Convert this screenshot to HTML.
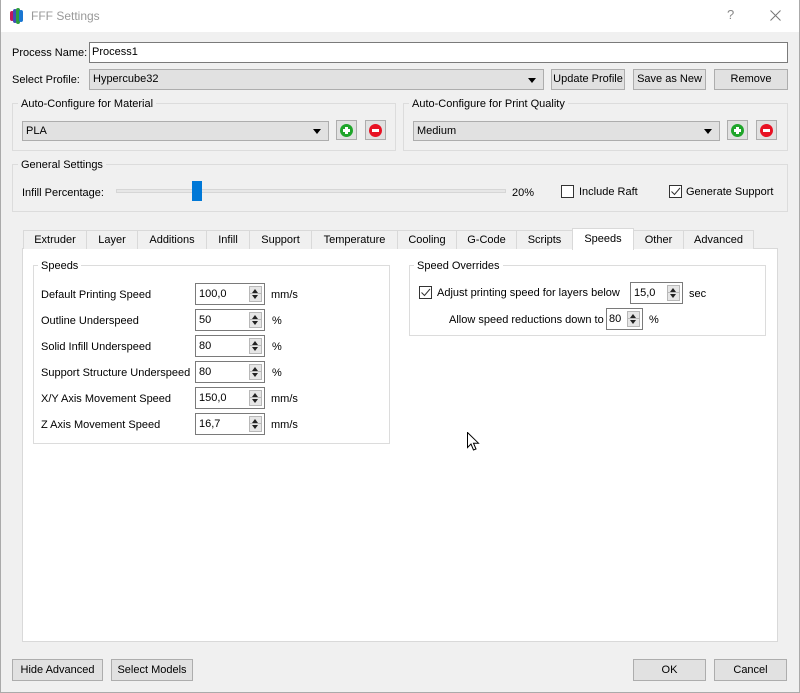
<!DOCTYPE html>
<html><head><meta charset="utf-8"><style>
*{box-sizing:border-box}
body{margin:0;width:800px;height:693px;overflow:hidden;background:#f0f0f0;font-family:"Liberation Sans",Arial,sans-serif;font-size:11px;color:#000;position:relative}
.a{position:absolute}
.t{position:absolute;white-space:nowrap;line-height:14px}
.btn{position:absolute;background:#e1e1e1;border:1px solid #adadad;text-align:center;white-space:nowrap}
.combo{position:absolute;background:#e1e1e1;border:1px solid #adadad;padding-left:3px;white-space:nowrap}
.combo:after{content:"";position:absolute;right:7px;top:50%;margin-top:-2px;border-left:4px solid transparent;border-right:4px solid transparent;border-top:5px solid #000}
.grp{position:absolute;border:1px solid #dcdcdc}
.gl{position:absolute;background:#f0f0f0;padding:0 3px;white-space:nowrap;line-height:14px}
.ib{position:absolute;width:21px;height:20px;background:#e1e1e1;border:1px solid #adadad}
.ib i{position:absolute;left:3px;top:3px;width:13px;height:13px;border-radius:50%}
.ib i:before,.ib i:after{content:"";position:absolute;background:#fff}
.ib i:before{left:3px;top:5px;width:7px;height:3px}
.g i:after{left:5px;top:3px;width:3px;height:7px}
.g i{background:#1fa52a}.r i{background:#e81123}
.spin{position:absolute;height:22px;background:#fff;border:1px solid #7a7a7a;padding-left:3px;line-height:20px}
.spin b{position:absolute;right:2px;top:2px;width:13px;height:16px;background:#e6e6e6;border:1px solid #b8b8b8}
.spin b:before{content:"";position:absolute;left:2px;top:2px;border-left:3px solid transparent;border-right:3px solid transparent;border-bottom:4px solid #222}
.spin b:after{content:"";position:absolute;left:2px;top:8px;border-left:3px solid transparent;border-right:3px solid transparent;border-top:4px solid #222}
.spin b i{position:absolute;left:0;right:0;top:6px;height:1px;background:#b8b8b8}
.cb{position:absolute;width:13px;height:13px;border:1px solid #333;background:#fff}
.tab{position:absolute;top:230px;height:19px;border:1px solid #d9d9d9;border-bottom:none;background:#f0f0f0;text-align:center;line-height:18px;white-space:nowrap}
</style></head><body>
<div class="a" style="left:0;top:0;width:800px;height:32px;background:#fff"></div>
<div class="a" style="left:0;top:0;width:1px;height:693px;background:#aaa"></div>
<div class="a" style="right:0;top:0;width:1px;height:693px;background:#aaa"></div>
<div class="a" style="left:0;bottom:0;width:800px;height:1px;background:#aaa"></div>
<svg class="a" style="left:9px;top:8px" width="16" height="16"><rect x="1" y="3" width="4" height="10" rx="2" fill="#c2185b"/><rect x="4" y="1" width="4" height="14" rx="2" fill="#3f51b5"/><rect x="7" y="0" width="4" height="16" rx="2" fill="#2e9e3e"/><rect x="10" y="2" width="4" height="12" rx="2" fill="#1976d2"/></svg>
<div class="t" style="left:31px;top:9px;font-size:12px;color:#999">FFF Settings</div>
<div class="t" style="left:727px;top:8px;font-size:13px;color:#888">?</div>
<svg class="a" style="left:770px;top:10px" width="11" height="11"><path d="M0.5 0.5L10.5 10.5M10.5 0.5L0.5 10.5" stroke="#777" stroke-width="1"/></svg>

<div class="t" style="left:12px;top:46px">Process Name:</div>
<div class="a" style="left:89px;top:42px;width:699px;height:21px;background:#fff;border:1px solid #7a7a7a;padding:2px 2px;line-height:14px">Process1</div>
<div class="t" style="left:12px;top:73px">Select Profile:</div>
<div class="combo" style="left:89px;top:69px;width:455px;height:21px;line-height:19px">Hypercube32</div>
<div class="btn" style="left:551px;top:69px;width:74px;height:21px;line-height:19px">Update Profile</div>
<div class="btn" style="left:633px;top:69px;width:73px;height:21px;line-height:19px">Save as New</div>
<div class="btn" style="left:714px;top:69px;width:74px;height:21px;line-height:19px">Remove</div>

<div class="grp" style="left:12px;top:103px;width:384px;height:48px"></div>
<div class="gl" style="left:18px;top:97px">Auto-Configure for Material</div>
<div class="combo" style="left:22px;top:121px;width:307px;height:20px;line-height:18px">PLA</div>
<div class="ib g" style="left:336px;top:120px"><i></i></div>
<div class="ib r" style="left:365px;top:120px"><i></i></div>

<div class="grp" style="left:403px;top:103px;width:385px;height:48px"></div>
<div class="gl" style="left:409px;top:97px">Auto-Configure for Print Quality</div>
<div class="combo" style="left:413px;top:121px;width:307px;height:20px;line-height:18px">Medium</div>
<div class="ib g" style="left:727px;top:120px"><i></i></div>
<div class="ib r" style="left:756px;top:120px"><i></i></div>

<div class="grp" style="left:12px;top:164px;width:776px;height:48px"></div>
<div class="gl" style="left:18px;top:158px">General Settings</div>
<div class="t" style="left:22px;top:186px">Infill Percentage:</div>
<div class="a" style="left:116px;top:189px;width:390px;height:4px;background:#e7e7e7;border:1px solid #d6d6d6"></div>
<div class="a" style="left:192px;top:181px;width:10px;height:20px;background:#0078d7"></div>
<div class="t" style="left:512px;top:186px">20%</div>
<div class="cb" style="left:561px;top:185px"></div>
<div class="t" style="left:579px;top:185px">Include Raft</div>
<div class="cb" style="left:669px;top:185px"><svg width="11" height="11" style="position:absolute;left:0;top:0"><path d="M1.5 5.5L4.5 8.5L10 2" stroke="#333" fill="none"/></svg></div>
<div class="t" style="left:686px;top:185px">Generate Support</div>

<div class="a" style="left:22px;top:248px;width:756px;height:394px;background:#fff;border:1px solid #d9d9d9"></div>
<div class="tab" style="left:23px;width:64px">Extruder</div>
<div class="tab" style="left:86px;width:52px">Layer</div>
<div class="tab" style="left:137px;width:70px">Additions</div>
<div class="tab" style="left:206px;width:44px">Infill</div>
<div class="tab" style="left:249px;width:63px">Support</div>
<div class="tab" style="left:311px;width:87px">Temperature</div>
<div class="tab" style="left:397px;width:60px">Cooling</div>
<div class="tab" style="left:456px;width:61px">G-Code</div>
<div class="tab" style="left:516px;width:57px">Scripts</div>
<div class="tab" style="left:572px;top:228px;width:62px;height:22px;background:#fff;line-height:20px">Speeds</div>
<div class="tab" style="left:633px;width:51px">Other</div>
<div class="tab" style="left:683px;width:71px">Advanced</div>

<div class="grp" style="left:33px;top:265px;width:357px;height:179px"></div>
<div class="gl" style="left:38px;top:259px;background:#fff">Speeds</div>
<div class="t" style="left:41px;top:288px">Default Printing Speed</div>
<div class="spin" style="left:195px;top:283px;width:70px">100,0<b><i></i></b></div><div class="t" style="left:271px;top:288px">mm/s</div>
<div class="t" style="left:41px;top:314px">Outline Underspeed</div>
<div class="spin" style="left:195px;top:309px;width:70px">50<b><i></i></b></div><div class="t" style="left:272px;top:314px">%</div>
<div class="t" style="left:41px;top:340px">Solid Infill Underspeed</div>
<div class="spin" style="left:195px;top:335px;width:70px">80<b><i></i></b></div><div class="t" style="left:272px;top:340px">%</div>
<div class="t" style="left:41px;top:366px">Support Structure Underspeed</div>
<div class="spin" style="left:195px;top:361px;width:70px">80<b><i></i></b></div><div class="t" style="left:272px;top:366px">%</div>
<div class="t" style="left:41px;top:392px">X/Y Axis Movement Speed</div>
<div class="spin" style="left:195px;top:387px;width:70px">150,0<b><i></i></b></div><div class="t" style="left:271px;top:392px">mm/s</div>
<div class="t" style="left:41px;top:418px">Z Axis Movement Speed</div>
<div class="spin" style="left:195px;top:413px;width:70px">16,7<b><i></i></b></div><div class="t" style="left:271px;top:418px">mm/s</div>

<div class="grp" style="left:409px;top:265px;width:357px;height:71px"></div>
<div class="gl" style="left:414px;top:259px;background:#fff">Speed Overrides</div>
<div class="cb" style="left:419px;top:286px"><svg width="11" height="11" style="position:absolute;left:0;top:0"><path d="M1.5 5.5L4.5 8.5L10 2" stroke="#333" fill="none"/></svg></div>
<div class="t" style="left:437px;top:286px">Adjust printing speed for layers below</div>
<div class="spin" style="left:630px;top:282px;width:53px">15,0<b><i></i></b></div><div class="t" style="left:689px;top:287px">sec</div>
<div class="t" style="left:449px;top:313px">Allow speed reductions down to</div>
<div class="spin" style="left:606px;top:308px;width:37px;padding-left:2px">80<b><i></i></b></div><div class="t" style="left:649px;top:313px">%</div>

<svg class="a" style="left:467px;top:432px" width="13" height="20"><path d="M0.5 0.5L0.5 15.5L4 12L6.5 18L9 17L6.5 11.2L11.5 11.2Z" fill="#fff" stroke="#000"/></svg>

<div class="btn" style="left:12px;top:659px;width:91px;height:22px;line-height:20px">Hide Advanced</div>
<div class="btn" style="left:111px;top:659px;width:82px;height:22px;line-height:20px">Select Models</div>
<div class="btn" style="left:633px;top:659px;width:73px;height:22px;line-height:20px">OK</div>
<div class="btn" style="left:714px;top:659px;width:73px;height:22px;line-height:20px">Cancel</div>
</body></html>
